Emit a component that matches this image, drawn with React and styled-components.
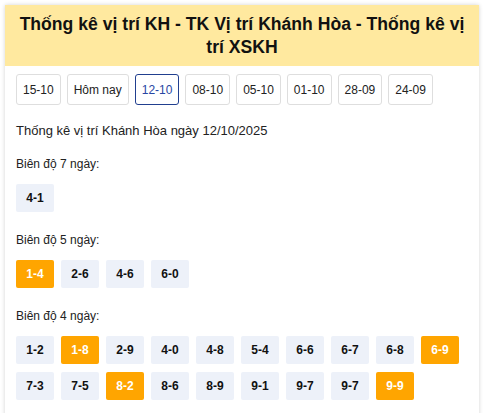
import React from 'react';
import styled, { createGlobalStyle } from 'styled-components';

const GlobalStyle = createGlobalStyle`
  body {
    margin: 0;
    background: #fff;
    font-family: "Liberation Sans", Arial, sans-serif;
    color: #222;
  }
`;

const Page = styled.div`
  padding: 5px 6px 0 5px;
`;

const Card = styled.section`
  background: #fff;
  box-shadow: 0 0 4px rgba(0, 0, 0, 0.18);
  min-height: 420px;
`;

const Header = styled.h1`
  margin: 0;
  padding: 7.5px 8px;
  background: #ffe99f;
  font-size: 17.6px;
  line-height: 23px;
  font-weight: bold;
  text-align: center;
  color: #111;
`;

const Body = styled.div`
  padding: 8px 11px 10px;
`;

const DateRow = styled.div`
  display: flex;
  flex-wrap: wrap;
  gap: 6px;
`;

const DateButton = styled.a`
  display: flex;
  align-items: center;
  height: 31px;
  box-sizing: border-box;
  padding: 0 6px;
  border: 1px solid ${(p) => (p.$active ? '#213f8f' : '#dedede')};
  border-radius: 3px;
  font-size: 12px;
  color: ${(p) => (p.$active ? '#2846a3' : '#222')};
`;

const Intro = styled.p`
  margin: 18px 0 0;
  font-size: 13px;
  line-height: 16px;
`;

const Group = styled.div`
  margin-top: ${(p) => (p.$first ? '18px' : '21px')};
`;

const Label = styled.div`
  font-size: 12px;
  line-height: 15px;
  margin-bottom: 12px;
`;

const Chips = styled.div`
  display: flex;
  flex-wrap: wrap;
  gap: 8px 7px;
`;

const Chip = styled.span`
  width: 38px;
  height: 28px;
  display: flex;
  align-items: center;
  justify-content: center;
  border-radius: 2px;
  font-size: 12px;
  font-weight: bold;
  background: ${(p) => (p.$hot ? '#ffa500' : '#edf1f9')};
  color: ${(p) => (p.$hot ? '#fff' : '#111')};
`;

const dates = ['15-10', 'Hôm nay', '12-10', '08-10', '05-10', '01-10', '28-09', '24-09'];

const groups = [
  { label: 'Biên độ 7 ngày:', items: [['4-1']] },
  { label: 'Biên độ 5 ngày:', items: [['1-4', 1], ['2-6'], ['4-6'], ['6-0']] },
  {
    label: 'Biên độ 4 ngày:',
    items: [
      ['1-2'], ['1-8', 1], ['2-9'], ['4-0'], ['4-8'], ['5-4'], ['6-6'], ['6-7'], ['6-8'], ['6-9', 1],
      ['7-3'], ['7-5'], ['8-2', 1], ['8-6'], ['8-9'], ['9-1'], ['9-7'], ['9-7'], ['9-9', 1],
    ],
  },
];

export default function App() {
  return (
    <Page>
      <GlobalStyle />
      <Card>
        <Header>Thống kê vị trí KH - TK Vị trí Khánh Hòa - Thống kê vị trí XSKH</Header>
        <Body>
          <DateRow>
            {dates.map((d) => (
              <DateButton key={d} $active={d === '12-10'}>
                {d}
              </DateButton>
            ))}
          </DateRow>
          <Intro>Thống kê vị trí Khánh Hòa ngày 12/10/2025</Intro>
          {groups.map((g, gi) => (
            <Group key={g.label} $first={gi === 0}>
              <Label>{g.label}</Label>
              <Chips>
                {g.items.map(([v, hot], i) => (
                  <Chip key={i} $hot={hot}>
                    {v}
                  </Chip>
                ))}
              </Chips>
            </Group>
          ))}
        </Body>
      </Card>
    </Page>
  );
}
